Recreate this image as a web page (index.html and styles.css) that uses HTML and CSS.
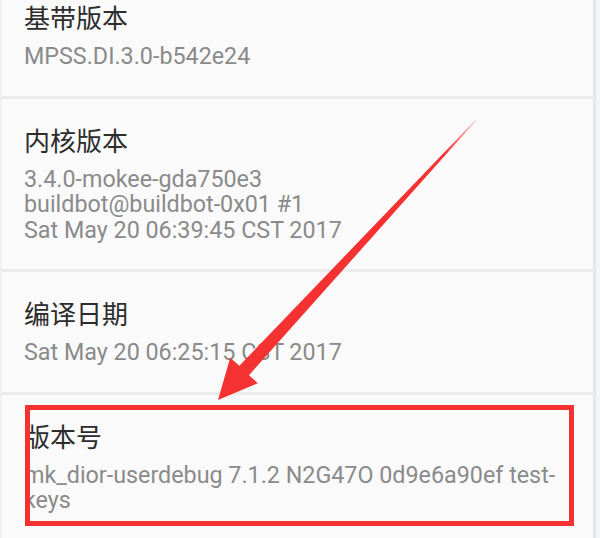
FILE: index.html
```html
<!DOCTYPE html>
<html lang="zh-CN">
<head>
<meta charset="utf-8">
<title>关于手机</title>
<link rel="stylesheet" href="styles.css">
</head>
<body>
<div class="screen">
  <div class="list">
    <div class="item first">
      <div class="title">基带版本</div>
      <div class="summary">MPSS.DI.3.0-b542e24</div>
    </div>
    <div class="item">
      <div class="title">内核版本</div>
      <div class="summary">3.4.0-mokee-gda750e3<br>buildbot@buildbot-0x01 #1<br>Sat May 20 06:39:45 CST 2017</div>
    </div>
    <div class="item">
      <div class="title">编译日期</div>
      <div class="summary">Sat May 20 06:25:15 CST 2017</div>
    </div>
    <div class="item last">
      <div class="title">版本号</div>
      <div class="summary">mk_dior-userdebug 7.1.2 N2G47O 0d9e6a90ef test-keys</div>
    </div>
  </div>
  <div class="scrollbar"></div>
  <div class="highlight"></div>
  <svg class="arrow" width="600" height="538" viewBox="0 0 600 538">
    <defs>
      <linearGradient id="fade" gradientUnits="userSpaceOnUse" x1="476" y1="120" x2="218" y2="400">
        <stop offset="0" stop-color="#f53232" stop-opacity="0.25"/>
        <stop offset="0.12" stop-color="#f53232" stop-opacity="1"/>
        <stop offset="1" stop-color="#f53232" stop-opacity="1"/>
      </linearGradient>
    </defs>
    <polygon fill="url(#fade)" points="218,400 230.2,357.8 239.4,365.8 475.6,119.7 476.4,120.3 249,375.2 257.8,383.2"/>
  </svg>
</div>
</body>
</html>
```

FILE: styles.css
```css
html, body {
  margin: 0;
  padding: 0;
  background: #fafafa;
}

.screen {
  position: relative;
  width: 600px;
  height: 538px;
  overflow: hidden;
  display: flex;
  background: #fafafa;
  font-family: Roboto, "Noto Sans CJK SC", sans-serif;
}

.list {
  flex: 1;
  border-left: 2px solid #f1f1f1;
}

.item {
  padding: 27px 26px 26px 22px;
  border-bottom: 3px solid #ebebeb;
}

.item.first {
  padding-top: 3px;
}

.item.last {
  border-bottom: none;
}

.title {
  font-size: 26px;
  line-height: 32px;
  color: #2c2c2c;
}

.summary {
  margin-top: 9px;
  font-size: 23.3px;
  line-height: 25.5px;
  color: #8a8a8a;
}

.scrollbar {
  width: 4px;
  border-left: 3px solid #e4e7ea;
  background: #f3f4f6;
}

.highlight {
  position: absolute;
  left: 25px;
  top: 405px;
  width: 539px;
  height: 111px;
  border: 5px solid #f53232;
}

.arrow {
  position: absolute;
  left: 0;
  top: 0;
}
```
